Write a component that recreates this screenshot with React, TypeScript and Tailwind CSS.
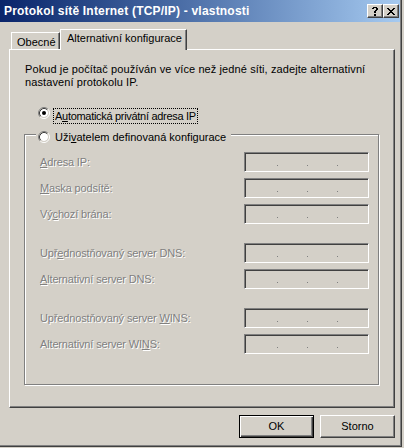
import type { ReactNode } from "react";

// pixel glyphs for the caption buttons
const closeGlyph = ["xx....xx", ".xx..xx.", "..xxxx..", "...xx...", "..xxxx..", ".xx..xx.", "xx....xx"];
const helpGlyph = ["..xxxx..", ".xx..xx.", ".....xx.", "....xx..", "...xx...", "...xx...", "........", "...xx...", "...xx..."];

const Glyph = ({ rows }: { rows: string[] }) => (
  <svg width={rows[0].length} height={rows.length} shapeRendering="crispEdges">
    {rows.flatMap((row, y) =>
      row.split("").map((c, x) => (c === "x" ? <rect key={`${x}-${y}`} x={x} y={y} width="1" height="1" fill="#000" /> : null))
    )}
  </svg>
);

const CaptionButton = ({ children }: { children: ReactNode }) => (
  <div className="w-[16px] h-[14px] flex items-center justify-center bg-[#d4d0c8] border border-t-white border-l-white border-r-[#404040] border-b-[#404040] shadow-[inset_-1px_-1px_0_#808080]">
    {children}
  </div>
);

const Radio = ({ checked }: { checked?: boolean }) => (
  <svg width="12" height="12" viewBox="0 0 12 12" className="shrink-0">
    <circle cx="6" cy="6" r="4" fill="#fff" />
    <path d="M2.11 9.89 A5.5 5.5 0 0 1 9.89 2.11" fill="none" stroke="#808080" />
    <path d="M9.89 2.11 A5.5 5.5 0 0 1 2.11 9.89" fill="none" stroke="#fff" />
    <path d="M2.82 9.18 A4.5 4.5 0 0 1 9.18 2.82" fill="none" stroke="#404040" />
    <path d="M9.18 2.82 A4.5 4.5 0 0 1 2.82 9.18" fill="none" stroke="#d4d0c8" />
    {checked && <circle cx="6" cy="6" r="2" fill="#000" />}
  </svg>
);

// disabled IP address field
const IpField = () => (
  <div className="w-[125px] h-[20px] shrink-0 flex pl-[32px] pt-[12px] gap-[29px] bg-[#d4d0c8] border border-t-[#808080] border-l-[#808080] border-r-white border-b-white shadow-[inset_1px_1px_0_#404040]">
    <span className="w-px h-px bg-[#808080]" />
    <span className="w-px h-px bg-[#808080]" />
    <span className="w-px h-px bg-[#808080]" />
  </div>
);

const Row = ({ label, className }: { label: ReactNode; className: string }) => (
  <div className={`flex items-center h-[20px] ml-[15px] ${className}`}>
    <span className="w-[204px] pt-px whitespace-nowrap tracking-[-0.15px] text-[#808080] [text-shadow:1px_1px_0_#fff]">{label}</span>
    <IpField />
  </div>
);

export default function App() {
  return (
    <div className="w-[404px] h-[448px] bg-[#d4d0c8] overflow-hidden font-['Liberation_Sans',Arial,sans-serif] text-[11px] leading-[13px] text-black">
      <div className="w-[402px] h-[447px] flex flex-col border-r border-b border-[#404040] shadow-[inset_-1px_-1px_0_#808080]">
        {/* Caption bar */}
        <div className="w-[400px] h-[22px] shrink-0 flex items-center pl-[4px] pr-[1px] bg-linear-to-r from-[#0a246a] to-[#a6caf0]">
          <span className="flex-1 whitespace-nowrap text-white font-bold text-[12px] leading-[14px] tracking-[0.2px]">
            Protokol sítě Internet (TCP/IP) - vlastnosti
          </span>
          <CaptionButton>
            <Glyph rows={helpGlyph} />
          </CaptionButton>
          <CaptionButton>
            <Glyph rows={closeGlyph} />
          </CaptionButton>
        </div>

        {/* Tabs */}
        <div className="h-[20px] mt-[7px] pl-[11px] flex items-end">
          <div className="w-[49px] h-[17px] pl-[5px] pt-[3px] whitespace-nowrap border-t border-l border-white border-r border-r-[#404040] shadow-[inset_-1px_0_0_#808080]">
            Obecné
          </div>
          <div className="relative z-10 w-[127px] h-[21px] -mb-px pl-[6px] pt-[2px] whitespace-nowrap bg-[#d4d0c8] border-t border-l border-white border-r border-r-[#404040] shadow-[inset_-1px_0_0_#808080]">
            Alternativní konfigurace
          </div>
        </div>

        {/* Tab page */}
        <div className="ml-[9px] w-[386px] h-[359px] shrink-0 flex flex-col border border-t-white border-l-white border-r-[#404040] border-b-[#404040] shadow-[inset_-1px_-1px_0_#808080]">
          <p className="ml-[15px] mt-[13px] whitespace-nowrap tracking-[0.1px]">
            Pokud je počítač používán ve více než jedné síti, zadejte alternativní
            <br />
            nastavení protokolu IP.
          </p>

          <div className="flex items-start ml-[28px] mt-[18px]">
            <Radio checked />
            <span className="ml-[3px] mt-px px-px leading-[14px] whitespace-nowrap tracking-[-0.3px] border border-dotted border-black">
              A<u>u</u>tomatická privátní adresa IP
            </span>
          </div>

          {/* Group box */}
          <div className="ml-[14px] mt-[10px] w-[355px] h-[251px] flex flex-col border border-[#808080] shadow-[inset_1px_1px_0_#fff,1px_1px_0_#fff]">
            <div className="self-start -mt-[6px] ml-[11px] h-[16px] flex items-center gap-[5px] pl-[2px] pr-[5px] bg-[#d4d0c8]">
              <Radio />
              <span className="whitespace-nowrap pt-px">
                Uži<u>v</u>atelem definovaná konfigurace
              </span>
            </div>

            <Row className="mt-[7px]" label={<><u>A</u>dresa IP:</>} />
            <Row className="mt-[6px]" label={<><u>M</u>aska podsítě:</>} />
            <Row className="mt-[6px]" label={<>Vý<u>c</u>hozí brána:</>} />

            <Row className="mt-[19px]" label={<>Upř<u>e</u>dnostňovaný server DNS:</>} />
            <Row className="mt-[6px]" label={<><u>A</u>lternativní server DNS:</>} />

            <Row className="mt-[19px]" label={<>Upřednostňovaný server <u>W</u>INS:</>} />
            <Row className="mt-[6px]" label={<>Alternativní server WI<u>N</u>S:</>} />
          </div>
        </div>

        {/* Dialog buttons */}
        <div className="ml-[9px] w-[386px] mt-[7px] flex justify-end gap-[6px]">
          <button className="w-[75px] h-[23px] flex items-center justify-center bg-[#d4d0c8] border border-black shadow-[inset_1px_1px_0_#fff,inset_-1px_-1px_0_#404040,inset_-2px_-2px_0_#808080]">
            OK
          </button>
          <button className="w-[75px] h-[23px] flex items-center justify-center bg-[#d4d0c8] border border-t-white border-l-white border-r-[#404040] border-b-[#404040] shadow-[inset_-1px_-1px_0_#808080]">
            Storno
          </button>
        </div>
      </div>
    </div>
  );
}
